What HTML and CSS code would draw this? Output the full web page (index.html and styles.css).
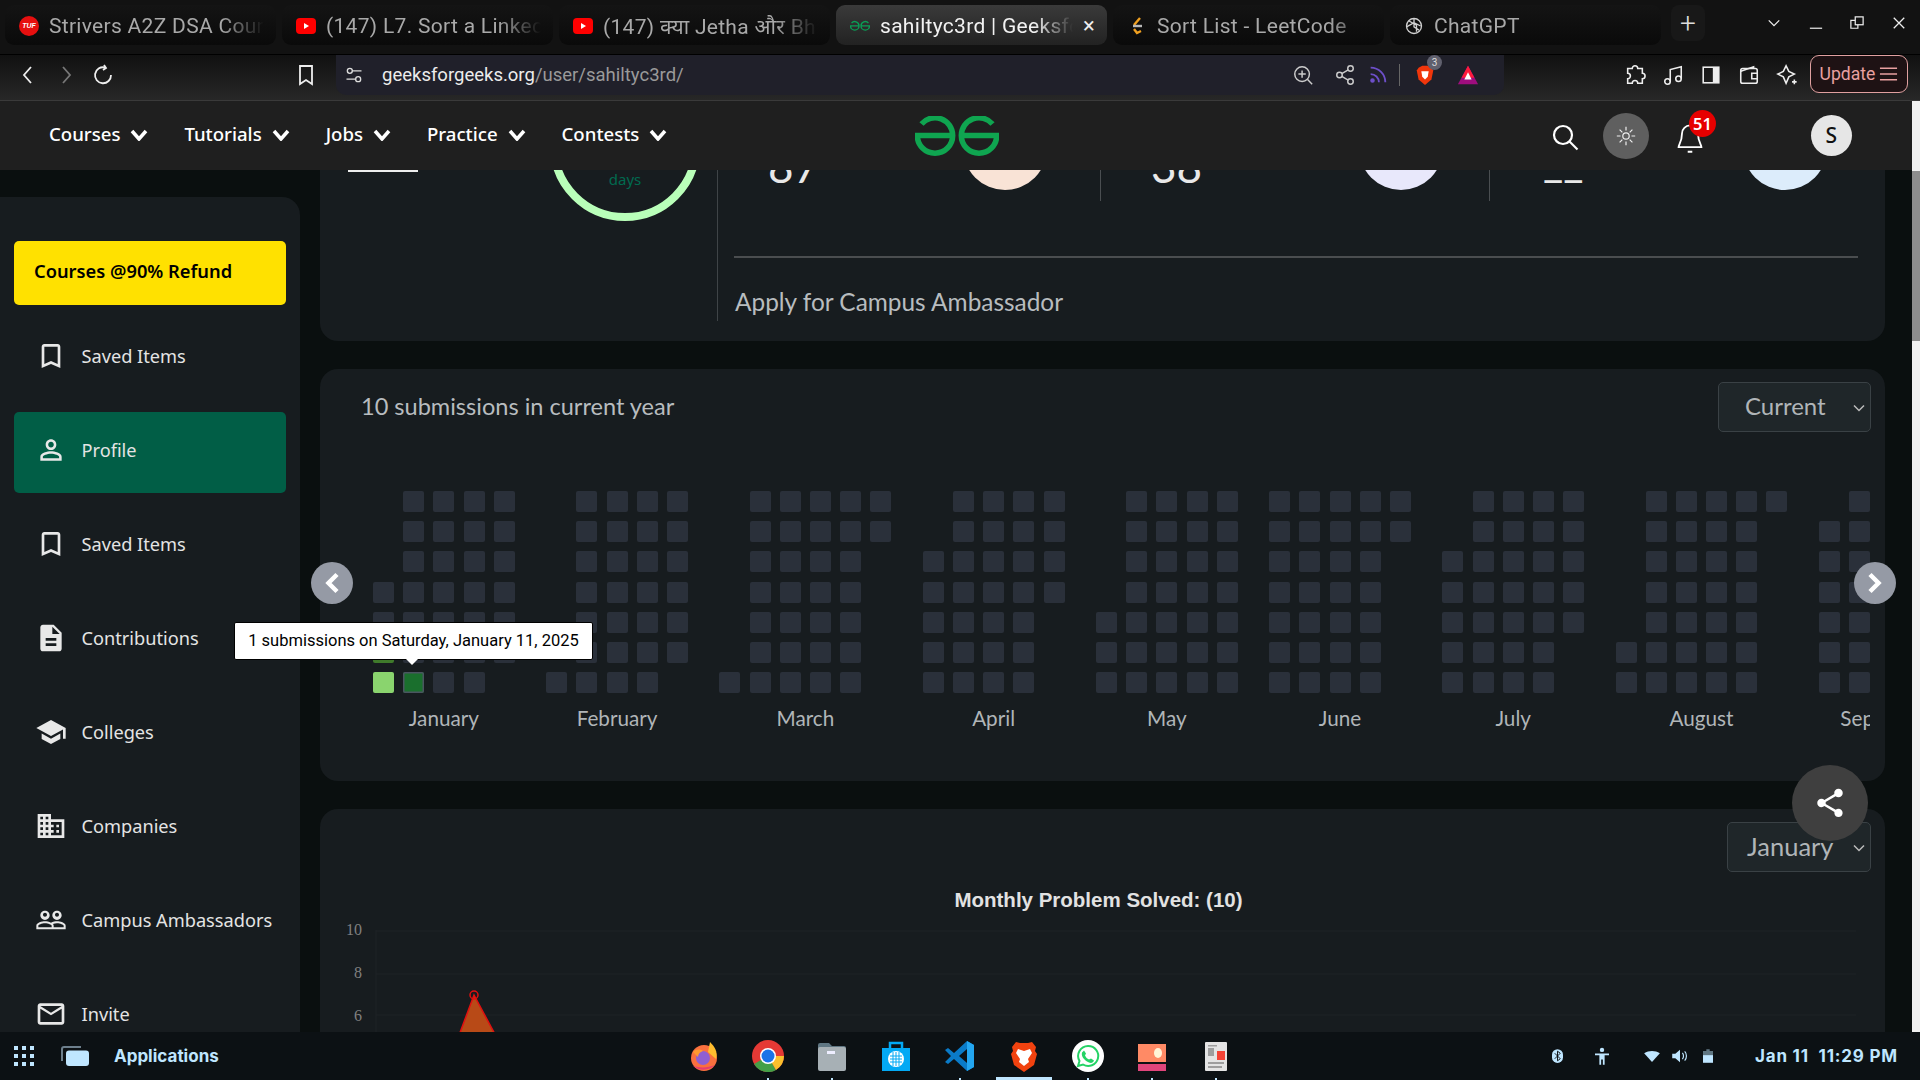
FILE: index.html
```html
<!DOCTYPE html>
<html lang="en">
<head>
<meta charset="utf-8">
<title>sahiltyc3rd | GeeksforGeeks</title>
<link rel="stylesheet" href="styles.css">
</head>
<body>
<div class="tabstrip">
  <div class="tab"><span class="fav fav-tuf">TUF</span><span class="tab-title">Strivers A2Z DSA Course</span></div>
  <div class="tab"><svg class="fav" viewBox="0 0 20 20"><rect y="2" width="20" height="16" rx="4" fill="#f00"/><path d="M8 7l5 3-5 3z" fill="#fff"/></svg><span class="tab-title">(147) L7. Sort a LinkedList</span></div>
  <div class="tab"><svg class="fav" viewBox="0 0 20 20"><rect y="2" width="20" height="16" rx="4" fill="#f00"/><path d="M8 7l5 3-5 3z" fill="#fff"/></svg><span class="tab-title">(147) क्या Jetha और Bhide</span></div>
  <div class="tab tab-active"><svg class="fav" viewBox="0 0 84 40" fill="none" stroke="#0a9e55" stroke-width="6"><path d="M6.500 8A17.700 17.700 0 0 1 37.700 19.500A17.700 17.700 0 0 1 2.300 19.500H37.700"/><path d="M77.500 8A17.700 17.700 0 0 0 46.300 19.500A17.700 17.700 0 0 0 81.700 19.500H46.300"/></svg><span class="tab-title">sahiltyc3rd | GeeksforGeeks</span><span class="tab-close">×</span></div>
  <div class="tab"><svg class="fav" viewBox="0 0 20 20" fill="none" stroke-width="2.400"><path d="M13 2L7 9" stroke="#f0a020"/><path d="M6 10h9" stroke="#b8b8b8"/><path d="M7 13l3 4 4-2" stroke="#f0a020"/></svg><span class="tab-title">Sort List - LeetCode</span></div>
  <div class="tab"><svg class="fav" viewBox="0 0 24 24" fill="none" stroke="#d0d0d0" stroke-width="1.600"><circle cx="12" cy="12" r="9"/><path d="M12 3v10l6 4M6 6l9 5v8M3 13l9-5 8 4"/></svg><span class="tab-title">ChatGPT</span></div>
  <div class="tab-new">+</div>
  <div class="win-controls">
    <svg viewBox="0 0 16 16" fill="none" stroke="#eee" stroke-width="1.500"><path d="M2 5l6 6 6-6"/></svg>
    <svg viewBox="0 0 16 16" fill="none" stroke="#ddd" stroke-width="1.500"><path d="M1 14h14"/></svg>
    <svg viewBox="0 0 16 16" fill="none" stroke="#eee" stroke-width="1.400"><rect x="6" y="1" width="9" height="9"/><path d="M6 5H1v9h8v-4"/></svg>
    <svg viewBox="0 0 16 16" fill="none" stroke="#eee" stroke-width="1.500"><path d="M2 2l12 12M14 2L2 14"/></svg>
  </div>
</div>

<div class="toolbar">
  <div class="nav-btns">
    <svg viewBox="0 0 24 24" class="tb-icon" fill="none" stroke="#eee" stroke-width="1.800"><path d="M15 4l-7 8 7 8"/></svg>
    <svg viewBox="0 0 24 24" class="tb-icon" fill="none" stroke="#777" stroke-width="1.800"><path d="M9 4l7 8-7 8"/></svg>
    <svg viewBox="0 0 24 24" class="tb-icon" fill="none" stroke="#eee" stroke-width="1.800"><path d="M14 4.500A8 8 0 1 0 20 12M13 2l2 3-3 2"/></svg>
  </div>
  <svg viewBox="0 0 24 24" class="tb-icon tb-bookmark" fill="none" stroke="#eee" stroke-width="1.800"><path d="M6 3h12v18l-6-4-6 4z"/></svg>
  <div class="address">
    <svg viewBox="0 0 24 24" class="addr-tune" fill="none" stroke="#ddd" stroke-width="1.600"><circle cx="7" cy="7" r="3"/><path d="M10 7h11M3 17h11"/><circle cx="17" cy="17" r="3"/></svg>
    <span class="url">geeksforgeeks.org<span class="url-path">/user/sahiltyc3rd/</span></span>
    <div class="addr-icons">
      <svg class="ai-zoom" viewBox="0 0 24 24" fill="none" stroke="#ccc" stroke-width="1.600"><circle cx="11" cy="11" r="8"/><path d="M17 17l5 5M11 7v8M7 11h8"/></svg>
      <svg class="ai-share" viewBox="0 0 24 24" fill="none" stroke="#ccc" stroke-width="1.600"><circle cx="18" cy="5" r="3"/><circle cx="6" cy="12" r="3"/><circle cx="18" cy="19" r="3"/><path d="M8.500 10.500l7-4M8.500 13.500l7 4"/></svg>
      <svg class="ai-rss" viewBox="0 0 24 24" fill="none" stroke="#6d4fc9" stroke-width="2"><path d="M4 4a16 16 0 0 1 16 16M4 11a9 9 0 0 1 9 9"/><circle cx="6" cy="18" r="1.500" fill="#6d4fc9"/></svg>
      <span class="addr-sep"></span>
      <span class="shield-wrap">
        <svg viewBox="0 0 24 24"><path d="M5 4l4-2h6l4 2 2 3-2 10-7 6-7-6L3 7z" fill="#f1360b"/><path d="M8 8h8l-1 6-3 3-3-3z" fill="#fff"/></svg>
        <span class="shield-badge">3</span>
      </span>
      <svg class="ai-bat" viewBox="0 0 24 24"><path d="M12 2l11 20H1z" fill="#9e0d7e"/><path d="M12 2l7 13H5z" fill="#ff1a3c"/><path d="M12 9l4 8H8z" fill="#fff"/></svg>
    </div>
  </div>
  <div class="ext-icons">
    <svg viewBox="0 0 24 24" fill="none" stroke="#eee" stroke-width="1.700"><path d="M9 5a3 3 0 0 1 6 0h5v5a3 3 0 0 1 0 6v5h-5a3 3 0 0 0-6 0H4v-5a3 3 0 0 0 0-6V5z"/></svg>
    <svg viewBox="0 0 24 24" fill="none" stroke="#eee" stroke-width="1.700"><circle cx="6" cy="19" r="3"/><circle cx="18" cy="16" r="3"/><path d="M9 19V6l12-3v13"/></svg>
    <svg viewBox="0 0 24 24"><rect x="3.500" y="3.500" width="17" height="17" fill="none" stroke="#eee" stroke-width="1.700"/><rect x="14" y="4" width="6" height="16" fill="#eee"/></svg>
    <svg viewBox="0 0 24 24" fill="none" stroke="#eee" stroke-width="1.700"><rect x="3" y="5" width="18" height="16" rx="2"/><path d="M3 8l14-5v2M21 10h-6v6h6"/></svg>
    <svg viewBox="0 0 24 24" fill="none" stroke="#eee" stroke-width="1.700"><path d="M11 2l3 6 6 3-6 3-3 7-3-7-6-3 6-3zM20 17v5M17.500 19.500h5"/></svg>
  </div>
  <div class="update">Update
    <svg viewBox="0 0 20 16" fill="none" stroke="#e8a0a0" stroke-width="1.600"><path d="M1 2h18M1 8h18M1 14h18"/></svg>
  </div>
</div>

<div class="viewport">
  <div class="page">
    <header class="site-nav">
      <nav class="menu">
        <a class="menu-item">Courses<svg viewBox="0 0 18 12" fill="none" stroke="#fff" stroke-width="3.500"><path d="M2 2l7 8 7-8"/></svg></a>
        <a class="menu-item">Tutorials<svg viewBox="0 0 18 12" fill="none" stroke="#fff" stroke-width="3.500"><path d="M2 2l7 8 7-8"/></svg></a>
        <a class="menu-item">Jobs<svg viewBox="0 0 18 12" fill="none" stroke="#fff" stroke-width="3.500"><path d="M2 2l7 8 7-8"/></svg></a>
        <a class="menu-item">Practice<svg viewBox="0 0 18 12" fill="none" stroke="#fff" stroke-width="3.500"><path d="M2 2l7 8 7-8"/></svg></a>
        <a class="menu-item">Contests<svg viewBox="0 0 18 12" fill="none" stroke="#fff" stroke-width="3.500"><path d="M2 2l7 8 7-8"/></svg></a>
      </nav>
      <svg class="logo" viewBox="0 0 84 40" fill="none" stroke="#0fa550" stroke-width="5.500"><path d="M6.500 8A17.700 17.700 0 0 1 37.700 19.500A17.700 17.700 0 0 1 2.300 19.500H37.700"/><path d="M77.500 8A17.700 17.700 0 0 0 46.300 19.500A17.700 17.700 0 0 0 81.700 19.500H46.300"/></svg>
      <div class="nav-tools">
        <svg class="search" viewBox="0 0 28 28" fill="none" stroke="#fff" stroke-width="2.200"><circle cx="12" cy="12" r="9"/><path d="M18.500 18.500l8 8"/></svg>
        <span class="theme"><svg viewBox="0 0 24 24" fill="none" stroke="#eee" stroke-width="1.300"><circle cx="12" cy="12" r="3.500"/><path d="M12 2v4M12 18v4M2 12h4M18 12h4M5 5l3 3M16 16l3 3M19 5l-3 3M8 16l-3 3"/></svg></span>
        <span class="bell"><svg viewBox="0 0 24 28" fill="none" stroke="#fff" stroke-width="1.600"><path d="M12 3a7 7 0 0 0-7 7c0 7-3 10-3 12h20c0-2-3-5-3-12a7 7 0 0 0-7-7zM10 26h4"/></svg><span class="bell-badge">51</span></span>
        <span class="avatar">S</span>
      </div>
    </header>

    <div class="content">
      <aside class="sidebar">
        <a class="promo">Courses @90% Refund</a>
        <a class="side-item"><svg viewBox="0 0 24 24"><path d="M17 3H7c-1.100 0-1.990.9-1.990 2L5 21l7-3 7 3V5c0-1.100-.9-2-2-2zm0 15l-5-2.180L7 18V5h10v13z"/></svg>Saved Items</a>
        <a class="side-item side-active"><svg viewBox="0 0 24 24"><path d="M12 5.900c1.160 0 2.100.94 2.100 2.100s-.94 2.100-2.100 2.100S9.900 9.160 9.900 8s.94-2.100 2.100-2.100m0 9c2.970 0 6.100 1.460 6.100 2.100v1.100H5.900V17c0-.64 3.130-2.100 6.100-2.100M12 4C9.790 4 8 5.790 8 8s1.790 4 4 4 4-1.790 4-4-1.790-4-4-4zm0 9c-2.670 0-8 1.340-8 4v3h16v-3c0-2.660-5.330-4-8-4z"/></svg>Profile</a>
        <a class="side-item"><svg viewBox="0 0 24 24"><path d="M17 3H7c-1.100 0-1.990.9-1.990 2L5 21l7-3 7 3V5c0-1.100-.9-2-2-2zm0 15l-5-2.180L7 18V5h10v13z"/></svg>Saved Items</a>
        <a class="side-item"><svg viewBox="0 0 24 24"><path d="M14 2H6c-1.100 0-1.990.9-1.990 2L4 20c0 1.100.89 2 1.990 2H18c1.100 0 2-.9 2-2V8l-6-6zm2 16H8v-2h8v2zm0-4H8v-2h8v2zm-3-5V3.500L18.500 9H13z"/></svg>Contributions</a>
        <a class="side-item"><svg viewBox="0 0 24 24"><path d="M5 13.180v4L12 21l7-3.820v-4L12 17l-7-3.820zM12 3L1 9l11 6 9-4.910V17h2V9L12 3z"/></svg>Colleges</a>
        <a class="side-item"><svg viewBox="0 0 24 24"><path d="M12 7V3H2v18h20V7H12zM6 19H4v-2h2v2zm0-4H4v-2h2v2zm0-4H4V9h2v2zm0-4H4V5h2v2zm4 12H8v-2h2v2zm0-4H8v-2h2v2zm0-4H8V9h2v2zm0-4H8V5h2v2zm10 12h-8v-2h2v-2h-2v-2h2v-2h-2V9h8v10zm-2-8h-2v2h2v-2zm0 4h-2v2h2v-2z"/></svg>Companies</a>
        <a class="side-item"><svg viewBox="0 0 24 24"><path d="M16.500 13c-1.200 0-3.070.34-4.500 1-1.430-.67-3.300-1-4.500-1C5.330 13 1 14.080 1 16.250V19h22v-2.750c0-2.170-4.330-3.250-6.500-3.250zm-4 4.500h-10v-1.250c0-.54 2.560-1.750 5-1.750s5 1.210 5 1.750v1.250zm9 0H14v-1.250c0-.46-.2-.86-.52-1.220.88-.3 1.960-.53 3.020-.53 2.440 0 5 1.210 5 1.750v1.250zM7.500 12c1.930 0 3.500-1.570 3.500-3.500S9.430 5 7.500 5 4 6.570 4 8.500 5.570 12 7.500 12zm0-5.500c.83 0 1.500.67 1.500 1.500s-.67 1.500-1.500 1.500S6 8.830 6 8s.67-1.500 1.500-1.500zm9 5.500c1.930 0 3.500-1.570 3.500-3.500S18.430 5 16.500 5 13 6.570 13 8.500s1.570 3.500 3.500 3.500zm0-5.500c.83 0 1.500.67 1.500 1.500s-.67 1.500-1.500 1.500S15 8.830 15 8s.67-1.500 1.500-1.500z"/></svg>Campus Ambassadors</a>
        <a class="side-item"><svg viewBox="0 0 24 24"><path d="M20 4H4c-1.100 0-1.990.9-1.990 2L2 18c0 1.100.9 2 2 2h16c1.100 0 2-.9 2-2V6c0-1.100-.9-2-2-2zm0 14H4V8l8 5 8-5v10zm-8-7L4 6h16l-8 5z"/></svg>Invite</a>
      </aside>

      <main class="main">
        <section class="card card-top">
          <div class="top-left">
            <span class="top-line"></span>
            <div class="ring"><span class="ring-text">days</span></div>
          </div>
          <div class="top-right">
            <div class="stats">
              <div class="stat stat-a"><span class="stat-num">87</span><span class="stat-pic pic-a"></span></div>
              <div class="stat stat-b"><span class="stat-num">38</span><span class="stat-pic pic-b"></span></div>
              <div class="stat stat-c"><span class="stat-num stat-blank">__</span><span class="stat-pic pic-c"></span></div>
            </div>
            <div class="apply">Apply for Campus Ambassador</div>
          </div>
        </section>

        <section class="card card-heat">
          <div class="heat-head">
            <span class="heat-title">10 submissions in current year</span>
            <span class="select select-current">Current<svg viewBox="0 0 12 8" fill="none" stroke="#bbb" stroke-width="1.500"><path d="M1 1.500l5 5 5-5"/></svg></span>
          </div>
          <div class="heat">
            <div class="month"><div class="days s3">
              <i></i><i></i><i class="lvl-olive"></i><i class="lvl-light"></i><i></i><i></i><i></i>
              <i></i><i></i><i></i><i class="lvl-dark"></i><i></i><i></i><i></i>
              <i></i><i></i><i></i><i></i><i></i><i></i><i></i>
              <i></i><i></i><i></i><i></i><i></i><i></i><i></i><i></i><i></i><i></i>
            </div><span>January</span></div>
            <div class="month"><div class="days s6">
              <i></i><i></i><i></i><i></i><i></i><i></i><i></i>
              <i></i><i></i><i></i><i></i><i></i><i></i><i></i>
              <i></i><i></i><i></i><i></i><i></i><i></i><i></i>
              <i></i><i></i><i></i><i></i><i></i><i></i><i></i>
            </div><span>February</span></div>
            <div class="month"><div class="days s6">
              <i></i><i></i><i></i><i></i><i></i><i></i><i></i>
              <i></i><i></i><i></i><i></i><i></i><i></i><i></i>
              <i></i><i></i><i></i><i></i><i></i><i></i><i></i>
              <i></i><i></i><i></i><i></i><i></i><i></i><i></i><i></i><i></i><i></i>
            </div><span>March</span></div>
            <div class="month"><div class="days s2">
              <i></i><i></i><i></i><i></i><i></i><i></i><i></i>
              <i></i><i></i><i></i><i></i><i></i><i></i><i></i>
              <i></i><i></i><i></i><i></i><i></i><i></i><i></i>
              <i></i><i></i><i></i><i></i><i></i><i></i><i></i><i></i><i></i>
            </div><span>April</span></div>
            <div class="month"><div class="days s4">
              <i></i><i></i><i></i><i></i><i></i><i></i><i></i>
              <i></i><i></i><i></i><i></i><i></i><i></i><i></i>
              <i></i><i></i><i></i><i></i><i></i><i></i><i></i>
              <i></i><i></i><i></i><i></i><i></i><i></i><i></i><i></i><i></i><i></i>
            </div><span>May</span></div>
            <div class="month"><div class="days s0">
              <i></i><i></i><i></i><i></i><i></i><i></i><i></i>
              <i></i><i></i><i></i><i></i><i></i><i></i><i></i>
              <i></i><i></i><i></i><i></i><i></i><i></i><i></i>
              <i></i><i></i><i></i><i></i><i></i><i></i><i></i><i></i><i></i>
            </div><span>June</span></div>
            <div class="month"><div class="days s2">
              <i></i><i></i><i></i><i></i><i></i><i></i><i></i>
              <i></i><i></i><i></i><i></i><i></i><i></i><i></i>
              <i></i><i></i><i></i><i></i><i></i><i></i><i></i>
              <i></i><i></i><i></i><i></i><i></i><i></i><i></i><i></i><i></i><i></i>
            </div><span>July</span></div>
            <div class="month"><div class="days s5">
              <i></i><i></i><i></i><i></i><i></i><i></i><i></i>
              <i></i><i></i><i></i><i></i><i></i><i></i><i></i>
              <i></i><i></i><i></i><i></i><i></i><i></i><i></i>
              <i></i><i></i><i></i><i></i><i></i><i></i><i></i><i></i><i></i><i></i>
            </div><span>August</span></div>
            <div class="month"><div class="days s1">
              <i></i><i></i><i></i><i></i><i></i><i></i><i></i>
              <i></i><i></i><i></i><i></i><i></i><i></i><i></i>
              <i></i><i></i><i></i><i></i><i></i><i></i><i></i>
              <i></i><i></i><i></i><i></i><i></i><i></i><i></i><i></i><i></i>
            </div><span>September</span></div>
          </div>
          <span class="pager pager-left"><svg viewBox="0 0 16 22" fill="none" stroke="#fff" stroke-width="4.500"><path d="M13 2.500L4.500 11l8.500 8.500"/></svg></span>
          <span class="pager pager-right"><svg viewBox="0 0 16 22" fill="none" stroke="#fff" stroke-width="4.500"><path d="M3 2.500L11.500 11 3 19.500"/></svg></span>
          <div class="tooltip">1 submissions on Saturday, January 11, 2025</div>
        </section>

        <section class="card card-chart">
          <div class="chart-head"><span class="select select-month">January<svg viewBox="0 0 12 8" fill="none" stroke="#bbb" stroke-width="1.500"><path d="M1 1.500l5 5 5-5"/></svg></span></div>
          <h2 class="chart-title">Monthly Problem Solved: (10)</h2>
          <svg class="chart" viewBox="0 0 1565 110">
            <g stroke="#1e2326"><path d="M56 2v108M56 3h1480M56 46h1480M56 87h1480"/></g>
            <g fill="#808080" font-family="Liberation Serif" font-size="16" text-anchor="end"><text x="42" y="7">10</text><text x="42" y="49.500">8</text><text x="42" y="92.500">6</text></g>
            <path d="M138 110L154 67L177 110z" fill="#b84a17" stroke="#e01010" stroke-width="1.500"/>
            <circle cx="154" cy="67" r="4" fill="none" stroke="#e01010" stroke-width="1.500"/>
          </svg>
        </section>

        <button class="share"><svg viewBox="0 0 24 24" fill="#fff"><path d="M18 16.080c-.76 0-1.440.3-1.960.77L8.910 12.700c.05-.23.09-.46.09-.7s-.04-.47-.09-.7l7.050-4.110c.54.5 1.250.81 2.040.81 1.660 0 3-1.340 3-3s-1.340-3-3-3-3 1.340-3 3c0 .24.04.47.09.7L8.040 9.810C7.500 9.310 6.790 9 6 9c-1.660 0-3 1.340-3 3s1.340 3 3 3c.79 0 1.500-.31 2.040-.81l7.120 4.160c-.05.21-.08.43-.08.65 0 1.610 1.310 2.920 2.920 2.920s2.920-1.310 2.920-2.920-1.310-2.920-2.920-2.920z"/></svg></button>
      </main>
    </div>
  </div>
  <div class="scrollbar"><span class="scroll-thumb"></span></div>
</div>

<footer class="taskbar">
  <div class="task-left">
    <svg class="launcher" viewBox="0 0 20 20" fill="#bfe6ff"><rect width="4" height="4"/><rect x="8" width="4" height="4"/><rect x="16" width="4" height="4"/><rect y="8" width="4" height="4"/><rect x="8" y="8" width="4" height="4"/><rect x="16" y="8" width="4" height="4"/><rect y="16" width="4" height="4"/><rect x="8" y="16" width="4" height="4"/><rect x="16" y="16" width="4" height="4"/></svg>
    <svg class="windows" viewBox="0 0 28 20"><path d="M1 15V3a2 2 0 0 1 2-2h17" fill="none" stroke="#6d7f8c" stroke-width="2"/><rect x="5" y="4.500" width="23" height="15.500" rx="3" fill="#bfe6ff"/></svg>
    <span class="apps">Applications</span>
  </div>
  <div class="dock">
    <span class="dock-item"><svg viewBox="0 0 32 32"><circle cx="16" cy="18" r="13" fill="#f9703e"/><path d="M22 2c5 5 8 10 6 17l-8-7z" fill="#ffbd2e"/><circle cx="15" cy="18" r="7" fill="#8e5fd1"/><path d="M5 12c3-3 7-3 10-1-3 1-5 3-5 6z" fill="#ff9a2e"/><path d="M5 26c6 5 16 5 22-1-7 3-15 3-22 1z" fill="#e63e6e"/></svg></span>
    <span class="dock-item dot"><svg viewBox="0 0 32 32"><circle cx="16" cy="16" r="16" fill="#e53935"/><path d="M16 16L2.100 24A16 16 0 0 0 24 29.900z" fill="#43a047"/><path d="M16 16l8 13.900A16 16 0 0 0 32 16z" fill="#fbc02d"/><circle cx="16" cy="16" r="8" fill="#fff"/><circle cx="16" cy="16" r="6.500" fill="#1a73e8"/></svg></span>
    <span class="dock-item dot"><svg viewBox="0 0 32 32"><path d="M2 5a2 2 0 0 1 2-2h9l3 3h12a2 2 0 0 1 2 2v4H2z" fill="#5f7682"/><rect x="2" y="7" width="28" height="24" rx="2" fill="#a7b0b5"/><rect x="11" y="11" width="8" height="3" fill="#eef"/></svg></span>
    <span class="dock-item"><svg viewBox="0 0 32 32"><rect x="2" y="8" width="28" height="23" fill="#03a9f4"/><path d="M10 10V3h12v7" fill="none" stroke="#03a9f4" stroke-width="2.500"/><circle cx="16" cy="19" r="8" fill="#fff"/><path d="M10 16h12M10 19h12M10 22h12M13 12v14M16 12v14M19 12v14" stroke="#03a9f4" stroke-width="1"/></svg></span>
    <span class="dock-item dot"><svg viewBox="0 0 32 32"><path d="M23 1l7 4v22l-7 4-13-12-6 5-3-2 6-6-6-6 3-2 6 5z" fill="#0a7bc8"/><path d="M23 1l7 4v22l-7 4z" fill="#23a6f0"/><path d="M23 9l-8 7 8 7z" fill="#0c1114"/></svg></span>
    <span class="dock-item dock-active"><svg viewBox="0 0 32 32"><path d="M8 2l4 1h8l4-1 4 5-1 4 2 3-3 11-10 7-10-7-3-11 2-3-1-4z" fill="#f1420f"/><path d="M10 9l6 2 6-2 2 4-4 6 1 3-5 4-5-4 1-3-4-6z" fill="#fff"/></svg></span>
    <span class="dock-item dot"><svg viewBox="0 0 32 32"><circle cx="16" cy="16" r="16" fill="#fff"/><path d="M16 6A10 10 0 0 0 7.500 21L6 26l5-1.500A10 10 0 1 0 16 6z" fill="none" stroke="#25d366" stroke-width="2"/><path d="M12 10.500l2 3-1 2c1 2 2 3 4 4l2-1 3 2c-1 3-4 3-7 1s-6-5-5-9z" fill="#25d366"/></svg></span>
    <span class="dock-item dot"><svg viewBox="0 0 32 32"><rect x="2" y="4" width="28" height="20" fill="#ff8a65"/><rect x="2" y="22" width="28" height="2" fill="#0c1114"/><rect x="2" y="24" width="28" height="7" fill="#e0457b"/><ellipse cx="22" cy="13" rx="4" ry="5" fill="#fff3d6"/></svg></span>
    <span class="dock-item dot"><svg viewBox="0 0 32 32"><rect x="5" y="2" width="22" height="29" rx="1" fill="#e4e4e4"/><path d="M8 5h9v1.500H8zM8 8h6v8H8zM8 22h16v2H8zM8 26h14v2H8z" fill="#9e9e9e"/><rect x="17" y="11" width="8" height="9" fill="#f44336"/></svg></span>
  </div>
  <div class="tray">
    <svg class="t-bt" viewBox="0 0 16 20"><rect width="16" height="20" rx="8" fill="#bfe6ff"/><path d="M4 6l8 8-4 3V3l4 3-8 8" fill="none" stroke="#0c1114" stroke-width="1.400"/></svg>
    <svg class="t-acc" viewBox="0 0 16 20" fill="#bfe6ff"><circle cx="8" cy="3" r="2.500"/><path d="M0 7h16v2h-5v11H9v-6H7v6H5V9H0z"/></svg>
    <svg class="t-wifi" viewBox="0 0 20 14" fill="#bfe6ff"><path d="M0 3c6-4 14-4 20 0L10 14z"/></svg>
    <svg class="t-vol" viewBox="0 0 20 18"><path d="M0 6h4l6-5v16l-6-5H0z" fill="#bfe6ff"/><path d="M13 5c2 2 2 6 0 8M16 3c3 3 3 9 0 12" stroke="#bfe6ff" stroke-width="1.500" fill="none"/></svg>
    <svg class="t-bat" viewBox="0 0 12 16"><path d="M4 0h4v2h4v14H0V2h4z" fill="#5f7682"/><rect y="7" width="12" height="9" fill="#bfe6ff"/></svg>
    <span class="clock">Jan 11&nbsp; 11:29 PM</span>
  </div>
</footer>
</body>
</html>
```
FILE: styles.css
```css
* { box-sizing: border-box; margin: 0; padding: 0; }
html, body { width: 1920px; height: 1080px; overflow: hidden; }
body { background: #0a0f0f; color: #ddd; font-family: "Noto Sans", sans-serif; display: flex; flex-direction: column; }

/* browser tabs */
.tabstrip { height: 55px; flex: none; background: #121212; border-bottom: 1px solid #000; display: flex; align-items: flex-start; gap: 6px; padding: 5px 0 0 5px; }
.tab { width: 271px; height: 40px; flex: none; border-radius: 9px; background: linear-gradient(#141414, #0a0a0a); display: flex; align-items: center; gap: 10px; padding: 1px 12px 0 14px; color: #a9a9a9; font: 21px Roboto, "Noto Sans", "Noto Sans Devanagari", sans-serif; letter-spacing: .3px; position: relative; }
.tab-active { background: linear-gradient(#3a3a3a, #222); color: #f2f2f2; }
.fav { width: 20px; height: 20px; flex: none; }
.fav-tuf { width: 20px; height: 20px; border-radius: 50%; background: #e60f0f; color: #fff; font: italic bold 7px/20px "Liberation Sans", sans-serif; letter-spacing: 0; text-align: center; }
.tab-title { flex: 1; min-width: 0; overflow: hidden; white-space: nowrap; -webkit-mask-image: linear-gradient(90deg, #000 80%, transparent); mask-image: linear-gradient(90deg, #000 80%, transparent); }
.tab-close { font-size: 22px; line-height: 1; color: #eee; }
.tab-new { width: 34px; height: 36px; margin-left: 4px; border-radius: 8px; background: #181818; color: #ddd; font: 300 28px/38px Roboto, sans-serif; text-align: center; }
.win-controls { display: flex; gap: 27.700px; margin-left: 56px; padding-top: 11px; }
.win-controls svg { width: 14px; height: 14px; }

/* toolbar */
.toolbar { height: 46px; flex: none; background: linear-gradient(#111, #272727); border-bottom: 1px solid #3a3a3a; display: flex; align-items: flex-start; padding-left: 16px; }
.tb-icon { width: 24px; height: 24px; }
.nav-btns { display: flex; gap: 13.500px; padding-top: 8px; }
.tb-bookmark { margin: 8px 0 0 179px; }
.address { width: 1168px; height: 40px; margin-left: 18px; background: #20202a; border-radius: 0 0 10px 10px; display: flex; align-items: center; padding-left: 8px; }
.addr-tune { width: 20px; height: 20px; }
.url { margin-left: 18px; color: #ececec; font: 18.500px Roboto, sans-serif; }
.url-path { color: #9a9a9a; }
.addr-icons { margin-left: auto; padding-right: 25px; display: flex; align-items: center; }
.addr-icons svg { width: 22px; height: 22px; display: block; }
.ai-share { margin-left: 20px; }
.ai-rss { margin-left: 11px; }
.addr-sep { width: 1px; height: 22px; background: #666; margin: 0 14px 0 10px; }
.ai-bat { margin-left: 21px; }
.shield-wrap { position: relative; }
.shield-badge { position: absolute; left: 13px; top: -9px; width: 15px; height: 15px; border-radius: 50%; background: #60606e; color: #ddd; font: 10px/15px Roboto, sans-serif; text-align: center; }
.ext-icons { display: flex; gap: 16px; margin-left: 120px; padding-top: 9px; }
.ext-icons svg { width: 22px; height: 22px; display: block; }
.update { width: 98px; height: 38px; margin: 0 0 0 12px; border: 1px solid #e0a0a0; border-radius: 9px; background: #1e1214; color: #e8a0a0; font: 17.600px/36px Roboto, sans-serif; display: flex; align-items: center; justify-content: center; gap: 4px; }
.update svg { width: 19px; height: 16px; }

/* page frame */
.viewport { flex: 1; min-height: 0; display: flex; }
.page { flex: 1; min-width: 0; display: flex; flex-direction: column; }
.scrollbar { width: 8px; flex: none; background: #f1f1f1; padding-top: 70px; }
.scroll-thumb { display: block; height: 170px; background: #8d8d8d; }

/* site nav */
.site-nav { height: 69px; flex: none; background: #1f1f1f; display: flex; align-items: center; padding-left: 49px; position: relative; z-index: 2; }
.menu { display: flex; gap: 36px; margin-top: -5px; }
.menu-item { display: flex; align-items: center; gap: 10px; color: #fff; font: 500 18.600px "Noto Sans", sans-serif; }
.menu-item svg { width: 18px; height: 12px; margin-top: 3px; }
.logo { width: 84px; height: 40px; margin-left: 248px; }
.nav-tools { display: flex; align-items: center; margin-left: 551.500px; }
.search { width: 28px; height: 28px; margin-top: 2px; }
.theme { width: 46px; height: 46px; margin-left: 24px; border-radius: 50%; background: #5f5f5f; display: flex; align-items: center; justify-content: center; }
.theme svg { width: 22px; height: 22px; }
.bell { position: relative; width: 28px; height: 32px; margin-left: 27px; margin-top: 4px; }
.bell svg { width: 28px; height: 32px; display: block; }
.bell-badge { position: absolute; left: 13px; top: -12px; width: 27px; height: 27px; border-radius: 50%; background: #e60000; color: #fff; font: 600 16.500px/27px "Noto Sans", sans-serif; text-align: center; }
.avatar { width: 41px; height: 41px; margin-left: 107px; border-radius: 50%; background: #e6e6e6; color: #111; font: 500 21px/41px "Noto Sans", sans-serif; text-align: center; }

/* content */
.content { flex: 1; min-height: 0; display: flex; overflow: hidden; }
.sidebar { width: 300px; flex: none; margin-top: 27px; padding: 44px 14px 0; background: #171c1f; border-radius: 0 18px 0 0; display: flex; flex-direction: column; }
.promo { height: 64px; flex: none; background: #ffe100; border-radius: 5px; color: #000; font: 600 18.300px/60px "Noto Sans", sans-serif; padding-left: 20px; margin-bottom: 17px; }
.side-item { height: 68px; flex: none; margin-bottom: 26px; display: flex; align-items: center; gap: 14.500px; padding: 0 0 0 21px; color: #e4e4e4; font: 18.200px "Noto Sans", sans-serif; white-space: nowrap; }
.side-item svg { width: 32px; height: 32px; flex: none; fill: #e8e8e8; }
.side-active { height: 81px; background: #015e46; border-radius: 5px; margin: -4.500px 0 17px; padding-bottom: 5px; }
.main { flex: 1; min-width: 0; display: flex; flex-direction: column; gap: 28px; padding: 0 27px 0 20px; position: relative; }
.card { background: #171c1f; border-radius: 18px; flex: none; position: relative; }

/* top card */
.card-top { height: 171px; border-radius: 0 0 18px 18px; display: flex; padding-bottom: 20px; overflow: hidden; }
.top-left { width: 397px; flex: none; height: 60px; display: flex; align-items: flex-start; padding-left: 28px; }
.top-line { width: 70px; height: 1.500px; background: #eee; }
.ring { width: 150px; height: 150px; margin: -99px 0 0 132px; border: 8px solid #b9ffb9; border-radius: 50%; display: flex; flex-direction: column; align-items: center; padding-top: 91px; flex: none; }
.ring-text { color: #016a4f; font: 15px/18px "Noto Sans", sans-serif; }
.top-right { flex: 1; border-left: 1px solid #3f4447; }
.stats { height: 31px; display: flex; }
.stat { display: flex; justify-content: space-between; align-items: flex-start; border-right: 1px solid #4a4e51; }
.stat-a { width: 383px; padding: 0 53px 0 50px; }
.stat-b { width: 389px; padding: 0 46px 0 50px; }
.stat-c { flex: 1; border-right: 0; padding: 0 58px 0 53px; }
.stat-num { color: #e8e8e8; font: 44px/48px Lato, sans-serif; margin-top: -28px; }
.stat-blank { font-size: 44px; margin-top: -34px; }
.stat-pic { width: 84px; height: 84px; border-radius: 50%; margin-top: -64px; flex: none; }
.pic-a { background: #f9e3d6; }
.pic-b { background: #e8e8fb; }
.pic-c { background: #dcecfb; }
.apply { margin: 55px 27px 0 16px; border-top: 2px solid #4a4d4f; padding: 28px 0 0 1px; color: #b8bcbf; font: 24.400px/32px Lato, sans-serif; }

/* heat map */
.card-heat { height: 412px; padding-top: 13px; }
.heat-head { display: flex; justify-content: space-between; align-items: flex-start; padding: 0 14px 0 41px; }
.heat-title { color: #b8bcbf; font: 23.550px/48px Lato, sans-serif; }
.select { height: 50px; background: #1f2629; border: 1px solid #3a4145; border-radius: 5px; color: #b0b5b8; font: 24px/46px Lato, sans-serif; display: flex; align-items: center; padding-bottom: 2px; position: relative; }
.select svg { position: absolute; right: 5px; top: 21px; width: 12px; height: 8px; }
.select-current { width: 153px; padding-left: 26px; }
.select-month { width: 144px; padding-left: 19px; font-size: 25.500px; }
.heat { margin: 59px 15px 0 53px; display: flex; gap: 31.450px; overflow: hidden; }
.month { flex: none; display: flex; flex-direction: column; }
.month span { align-self: center; white-space: nowrap; color: #b0b5b8; font: 20.700px/28px Lato, sans-serif; margin-top: 11px; }
.days { display: grid; grid-auto-flow: column; grid-template-rows: repeat(7, 21px); grid-auto-columns: 21px; column-gap: 9.200px; row-gap: 9.200px; }
.days i { background: #2a303a; border-radius: 2px; }
.s1 i:first-child { grid-row-start: 2; }
.s2 i:first-child { grid-row-start: 3; }
.s3 i:first-child { grid-row-start: 4; }
.s4 i:first-child { grid-row-start: 5; }
.s5 i:first-child { grid-row-start: 6; }
.s6 i:first-child { grid-row-start: 7; }
.days .lvl-olive { background: #3f7a2b; }
.days .lvl-light { background: #8ad46e; }
.days .lvl-dark { background: #1a6f2d; box-shadow: inset 0 0 0 1.500px #4a5560; }
.pager { position: absolute; top: 193px; width: 42px; height: 42px; border-radius: 50%; background: #959aa5; display: flex; align-items: center; justify-content: center; z-index: 3; }
.pager svg { width: 16px; height: 22px; }
.pager-left { left: -9px; }
.pager-right { right: -11px; }
.tooltip { position: absolute; left: -86px; top: 253px; height: 38px; width: 359px; background: #fff; border: 1px solid #000; border-radius: 2px; color: #000; font: 16.500px/35px Roboto, sans-serif; text-align: center; z-index: 4; white-space: nowrap; }
.tooltip::after { content: ""; position: absolute; left: 171px; top: 36px; border: 6px solid transparent; border-top-color: #fff; border-bottom: 0; }

/* chart */
.card-chart { flex: 1; padding-top: 13px; overflow: hidden; border-radius: 18px 18px 0 0; }
.chart-head { display: flex; justify-content: flex-end; padding-right: 14px; }
.chart-title { color: #e2e2e2; font: 700 20.500px/24px "Liberation Sans", sans-serif; text-align: center; margin: 16px 8px 0 0; }
.chart { display: block; width: 1565px; height: 110px; margin-top: 16px; overflow: visible; }
.share { position: absolute; right: 44px; top: 595px; width: 76px; height: 76px; border: 0; border-radius: 50%; background: #3f3f3f; display: flex; align-items: center; justify-content: center; z-index: 5; }
.share svg { width: 34px; height: 34px; }

/* taskbar */
.taskbar { height: 48px; flex: none; background: #0c1114; display: flex; align-items: center; position: relative; z-index: 6; }
.task-left { display: flex; align-items: center; padding-left: 14px; width: 672px; flex: none; }
.launcher { width: 20px; height: 20px; }
.windows { width: 28px; height: 20px; margin-left: 27px; }
.apps { margin-left: 25px; color: #bfe6ff; font: 700 17px Inter, sans-serif; }
.dock { display: flex; align-items: center; }
.dock-item { width: 64px; height: 48px; display: flex; align-items: center; justify-content: center; position: relative; }
.dock-item svg { width: 32px; height: 32px; }
.dot::after { content: ""; position: absolute; left: 31px; bottom: 0; width: 2px; height: 2px; background: #bfe6ff; }
.dock-active::after { content: ""; position: absolute; left: 4px; right: 4px; bottom: 0; height: 3px; background: #bfe6ff; }
.tray { padding-left: 303px; display: flex; align-items: center; }
.t-bt { width: 11px; height: 18px; margin-left: 1px; }
.t-acc { width: 14px; height: 18px; margin-left: 32px; }
.t-wifi { width: 16px; height: 11px; margin-left: 35px; }
.t-vol { width: 16px; height: 14px; margin-left: 12px; }
.t-bat { width: 10px; height: 14px; margin-left: 15px; }
.clock { margin-left: 42px; color: #bfe6ff; font: 700 17px Inter, sans-serif; letter-spacing: .8px; white-space: nowrap; }
```
